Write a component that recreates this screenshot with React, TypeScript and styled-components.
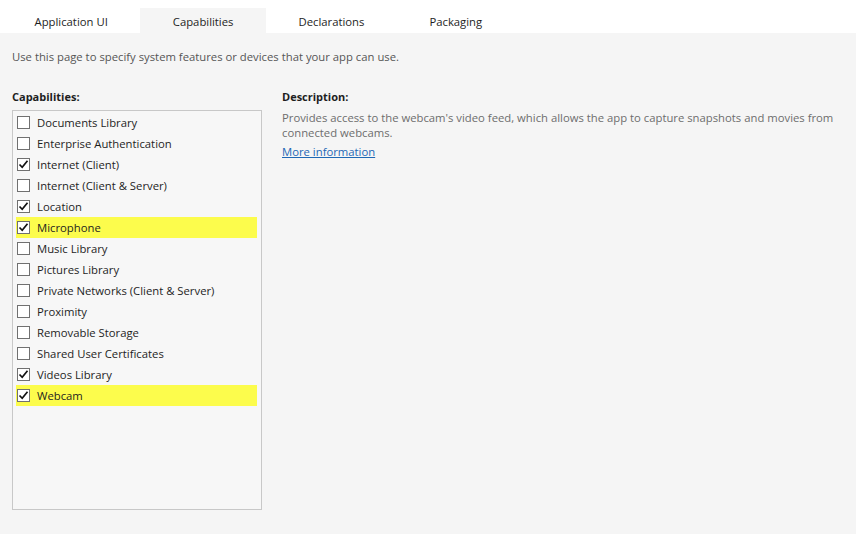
import styled, { createGlobalStyle } from "styled-components";

const GlobalStyle = createGlobalStyle`
  html, body {
    margin: 0;
    padding: 0;
    background: #f5f5f5;
    font-family: "Open Sans", "Noto Sans", sans-serif;
    font-size: 11.3px;
    color: #1e1e1e;
  }
`;

const Page = styled.div`
  width: 856px;
  height: 534px;
  display: flex;
  flex-direction: column;
  overflow: hidden;
`;

const TabStrip = styled.div`
  display: flex;
  align-items: flex-end;
  height: 33px;
  padding-left: 2px;
  background: #ffffff;
`;

const Tab = styled.div<{ $active?: boolean }>`
  box-sizing: border-box;
  height: 25px;
  padding: 2px 32.5px 0 32.5px;
  display: flex;
  align-items: center;
  justify-content: center;
  background: ${(p) => (p.$active ? "#f5f5f5" : "transparent")};
  color: #1e1e1e;
`;

const Content = styled.div`
  flex: 1;
  padding: 15px 12px 0 12px;
`;

const Intro = styled.p`
  margin: 0 0 23px 0;
  line-height: 18px;
  color: #555555;
`;

const Columns = styled.div`
  display: flex;
  gap: 20px;
`;

const Column = styled.div<{ $width?: string }>`
  display: flex;
  flex-direction: column;
  width: ${(p) => p.$width ?? "auto"};
  flex: ${(p) => (p.$width ? "none" : "1")};
`;

const Heading = styled.div`
  font-weight: 700;
  font-size: 11px;
  line-height: 16px;
  margin-bottom: 5px;
  color: #1e1e1e;
`;

const ListBox = styled.div`
  box-sizing: border-box;
  width: 250px;
  height: 400px;
  border: 1px solid #c8c8c8;
  background: #f7f7f7;
  padding: 1px 4px 0 3px;
`;

const Row = styled.label<{ $highlight?: boolean }>`
  display: flex;
  align-items: center;
  gap: 7px;
  height: 21px;
  padding-left: 1px;
  background: ${(p) => (p.$highlight ? "#fcfc4c" : "transparent")};
  color: #1e1e1e;
`;

const Box = styled.span`
  box-sizing: border-box;
  width: 13px;
  height: 13px;
  border: 1px solid #707070;
  background: #ffffff;
  display: flex;
  align-items: center;
  justify-content: center;
`;

const DescText = styled.p`
  margin: 0;
  line-height: 15px;
  color: #6d6d6d;
`;

const MoreLink = styled.a`
  margin-top: 4px;
  line-height: 16px;
  color: #1e68b5;
  text-decoration: underline;
  cursor: pointer;
`;

const capabilities: { name: string; checked: boolean; highlight?: boolean }[] = [
  { name: "Documents Library", checked: false },
  { name: "Enterprise Authentication", checked: false },
  { name: "Internet (Client)", checked: true },
  { name: "Internet (Client & Server)", checked: false },
  { name: "Location", checked: true },
  { name: "Microphone", checked: true, highlight: true },
  { name: "Music Library", checked: false },
  { name: "Pictures Library", checked: false },
  { name: "Private Networks (Client & Server)", checked: false },
  { name: "Proximity", checked: false },
  { name: "Removable Storage", checked: false },
  { name: "Shared User Certificates", checked: false },
  { name: "Videos Library", checked: true },
  { name: "Webcam", checked: true, highlight: true },
];

const Check = () => (
  <svg width="11" height="11" viewBox="0 0 11 11">
    <path d="M1.5 5.5 L4.2 8.3 L9.5 1.8" fill="none" stroke="#111" strokeWidth="1.7" />
  </svg>
);

const tabs = ["Application UI", "Capabilities", "Declarations", "Packaging"];

export default function App() {
  return (
    <Page>
      <GlobalStyle />
      <TabStrip>
        {tabs.map((t) => (
          <Tab key={t} $active={t === "Capabilities"}>
            {t}
          </Tab>
        ))}
      </TabStrip>
      <Content>
        <Intro>Use this page to specify system features or devices that your app can use.</Intro>
        <Columns>
          <Column $width="250px">
            <Heading>Capabilities:</Heading>
            <ListBox>
              {capabilities.map((c) => (
                <Row key={c.name} $highlight={c.highlight}>
                  <Box>{c.checked && <Check />}</Box>
                  {c.name}
                </Row>
              ))}
            </ListBox>
          </Column>
          <Column>
            <Heading>Description:</Heading>
            <DescText>
              Provides access to the webcam's video feed, which allows the app to capture snapshots and movies from
              connected webcams.
            </DescText>
            <MoreLink>More information</MoreLink>
          </Column>
        </Columns>
      </Content>
    </Page>
  );
}
